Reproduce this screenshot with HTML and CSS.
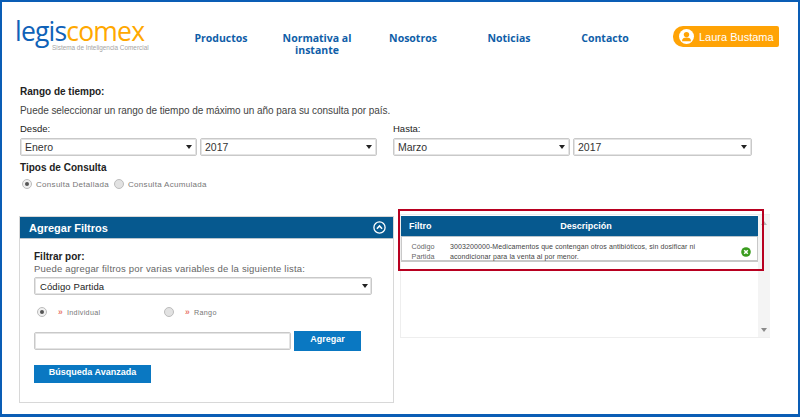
FILE: index.html
```html
<!DOCTYPE html>
<html lang="es">
<head>
<meta charset="utf-8">
<title>Legiscomex</title>
<link rel="stylesheet" href="styles.css">
</head>
<body>
<div class="frame">
  <header class="top">
    <div class="logo">
      <div class="logo-word"><span class="logo-a">legis</span><span class="logo-b">comex</span></div>
      <div class="logo-sub">Sistema de Inteligencia Comercial</div>
    </div>
    <nav class="nav">
      <a class="nav-item">Productos</a>
      <a class="nav-item">Normativa al instante</a>
      <a class="nav-item">Nosotros</a>
      <a class="nav-item">Noticias</a>
      <a class="nav-item">Contacto</a>
    </nav>
    <div class="user">
      <svg class="user-icon" width="15" height="15" viewBox="0 0 15 15"><circle cx="7.5" cy="7.5" r="7.5" fill="#fff"/><circle cx="7.5" cy="5.6" r="2.7" fill="#ffa305"/><path d="M3 12.2c0-2.6 1.8-3.7 4.5-3.7s4.500 1.100 4.500 3.700z" fill="#ffa305"/></svg>
      <span>Laura Bustama</span>
    </div>
  </header>

  <section class="range">
    <h2 class="label-strong">Rango de tiempo:</h2>
    <p class="hint">Puede seleccionar un rango de tiempo de máximo un año para su consulta por país.</p>
    <div class="dates">
      <div class="date-col date-from">
        <div class="label">Desde:</div>
        <div class="select-pair">
          <div class="select sel-w1"><span>Enero</span><i class="arrow"></i></div>
          <div class="select sel-w1"><span>2017</span><i class="arrow"></i></div>
        </div>
      </div>
      <div class="date-col">
        <div class="label">Hasta:</div>
        <div class="select-pair">
          <div class="select sel-w1"><span>Marzo</span><i class="arrow"></i></div>
          <div class="select sel-w2"><span>2017</span><i class="arrow"></i></div>
        </div>
      </div>
    </div>
    <h2 class="label-strong types">Tipos de Consulta</h2>
    <div class="types-row">
      <i class="radio on"></i><span class="type-text">Consulta Detallada</span>
      <i class="radio"></i><span class="type-text">Consulta Acumulada</span>
    </div>
  </section>

  <section class="panels">
    <div class="panel">
      <div class="panel-head">
        <span>Agregar Filtros</span>
        <svg width="13" height="13" viewBox="0 0 13 13"><circle cx="6.500" cy="6.500" r="5.600" fill="none" stroke="#fff" stroke-width="1.300"/><path d="M3.900 7.700 6.500 5l2.600 2.700" fill="none" stroke="#fff" stroke-width="1.600"/></svg>
      </div>
      <div class="panel-body">
        <div class="filter-title">Filtrar por:</div>
        <div class="filter-hint">Puede agregar filtros por varias variables de la siguiente lista:</div>
        <div class="select select-wide"><span>Código Partida</span><i class="arrow"></i></div>
        <div class="modes">
          <div class="mode mode-a"><i class="radio on"></i><b class="chev">»</b><span>Individual</span></div>
          <div class="mode"><i class="radio"></i><b class="chev">»</b><span>Rango</span></div>
        </div>
        <div class="add-row">
          <div class="text-input"></div>
          <button class="btn btn-add">Agregar</button>
        </div>
        <button class="btn btn-search">Búsqueda Avanzada</button>
      </div>
    </div>

    <div class="results">
      <div class="results-inner">
        <div class="table-head"><span class="col-a">Filtro</span><span class="col-b">Descripción</span></div>
        <div class="table-row">
          <span class="cell-a">Código Partida</span>
          <span class="cell-b">3003200000-Medicamentos que contengan otros antibióticos, sin dosificar ni acondicionar para la venta al por menor.</span>
          <svg class="remove" width="10" height="10" viewBox="0 0 10 10"><circle cx="5" cy="5" r="4.800" fill="#3a9c1e"/><path d="M3.200 3.200l3.600 3.600M6.800 3.200 3.200 6.800" stroke="#fff" stroke-width="1.500"/></svg>
        </div>
      </div>
      <div class="scrollbar"><svg width="6" height="4" viewBox="0 0 6 4"><path d="M3 0l3 4H0z" fill="#b5b5b5"/></svg><svg width="6" height="4" viewBox="0 0 6 4"><path d="M0 0h6L3 4z" fill="#8a8a8a"/></svg></div>
      <div class="highlight"></div>
    </div>
  </section>
</div>
</body>
</html>
```

FILE: styles.css
```css
* { box-sizing: border-box; }
html, body { margin: 0; padding: 0; }
body { width: 800px; height: 417px; overflow: hidden; background: #fff; font-family: "Liberation Sans", Arial, sans-serif; color: #222; }
.frame { width: 800px; height: 417px; border: solid #0a5db5; border-width: 2px 2px 3px 2px; padding: 0 0 0 18px; }

.top { display: flex; height: 76px; align-items: flex-start; }
.logo { width: 153px; margin-left: -5px; padding-top: 14px; color: #999; }
.logo-word { font-family: "Open Sans", sans-serif; font-size: 26.500px; line-height: 30px; letter-spacing: -0.8px; font-weight: 400; white-space: nowrap; }
.logo-a { color: #0e62b8; }
.logo-b { color: #ffa800; }
.logo-sub { font-size: 6.400px; line-height: 8px; margin-top: -2px; padding-left: 37px; color: #a5a5a5; white-space: nowrap; }
.nav { display: flex; width: 481px; margin-left: 5px; padding-top: 30px; }
.nav-item { width: 96px; text-align: center; padding: 0 8px; font-family: "Open Sans", sans-serif; font-weight: 700; font-size: 10.500px; line-height: 12px; color: #0f5ea8; }
.user { display: flex; align-items: center; gap: 5px; width: 106px; height: 21px; margin-top: 24px; margin-left: 19px; padding-left: 6px; border-radius: 10px 2px 2px 10px; background: #ffa305; color: #fff; font-size: 11px; white-space: nowrap; }
.user-icon { flex: none; }

.range { display: block; }
h2.label-strong { margin: 0; font-size: 10px; line-height: 13px; font-weight: 700; color: #222; padding-top: 7px; }
.hint { margin: 6px 0 0; font-size: 10px; line-height: 14px; color: #444; letter-spacing: -0.050px; }
.dates { display: flex; margin-top: 5px; }
.date-from { width: 373px; }
.label { font-size: 9.500px; line-height: 12px; color: #222; margin-bottom: 3px; }
.select-pair { display: flex; gap: 3px; }
.select { display: flex; justify-content: space-between; align-items: center; height: 18px; padding: 0 4px 0 4px; border: 1px solid #c9c9c9; border-radius: 2px; font-size: 10.500px; color: #333; background: #fff; box-shadow: inset 0 0 0 1px #e4e4e4; }
.sel-w1 { width: 177px; }
.sel-w2 { width: 179px; }
.arrow { width: 0; height: 0; border: 3px solid transparent; border-top: 4px solid #222; border-bottom: 0; }
h2.types { padding-top: 5px; }
.types-row { display: flex; align-items: center; height: 12px; margin-top: 4px; padding-left: 2px; }
.radio { flex: none; position: relative; display: block; width: 10px; height: 10px; border-radius: 50%; border: 1px solid #bcbcbc; background: #e2e2e2; }
.radio.on { background: #f0f0f0; }
.radio.on::after { content: ""; position: absolute; left: 2px; top: 2px; width: 4px; height: 4px; border-radius: 50%; background: #555; }
.type-text { font-size: 8px; letter-spacing: 0.300px; color: #777; margin: 0 5px 0 4px; }

.panels { display: flex; margin-top: 26px; }
.panel { width: 375px; height: 187px; margin-left: -1px; border: 1px solid #d8d8d8; }
.panel-head { display: flex; justify-content: space-between; align-items: center; height: 22px; padding: 0 7px 0 9px; background: #06598f; border-bottom: 1px solid #b8c4cc; color: #fff; font-size: 11px; font-weight: 700; }
.panel-body { padding: 12px 0 0 14px; }
.filter-title { font-size: 10px; line-height: 12px; font-weight: 700; color: #222; }
.filter-hint { font-size: 9.500px; line-height: 13px; margin-top: -1px; color: #666; letter-spacing: 0.180px; }
.select-wide { width: 338px; height: 18px; margin-top: 2px; padding: 0 3px 0 5px; font-size: 9.500px; letter-spacing: 0.100px; color: #222; }
.modes { display: flex; align-items: center; margin-top: 11px; padding-left: 3px; height: 12px; }
.mode { display: flex; align-items: center; font-size: 7.200px; letter-spacing: 0.300px; color: #777; }
.mode-a { width: 127px; }
.chev { width: 9px; margin-left: 11px; color: #e9786c; font-size: 8.500px; font-weight: 700; }
.add-row { display: flex; gap: 3px; margin-top: 13px; align-items: flex-start; height: 20px; }
.text-input { width: 257px; height: 18px; margin-top: 1px; border: 1px solid #c9c9c9; border-radius: 2px; box-shadow: inset 0 0 0 1px #e4e4e4; }
.btn { display: block; border: 0; margin: 0; background: #0a78c2; color: #fff; font-family: "Liberation Sans", Arial, sans-serif; font-size: 9px; font-weight: 700; padding: 0; text-align: center; }
.btn-add { width: 67px; height: 20px; padding-bottom: 5px; }
.btn-search { width: 117px; height: 18px; margin-top: 14px; padding-bottom: 5px; }

.results { position: relative; display: flex; width: 370px; height: 124px; margin-left: 6px; margin-top: -2px; border: solid #eee; border-width: 1px 0 1px 1px; }
.results-inner { width: 357px; padding-top: 1px; }
.table-head { display: flex; align-items: center; height: 21px; background: #06598f; border-bottom: 1px solid #b8c4cc; color: #fff; font-size: 9px; font-weight: 700; }
.col-a { width: 67px; padding-left: 8px; }
.col-b { width: 236px; text-align: center; }
.table-row { display: flex; align-items: flex-start; height: 25px; padding-top: 5px; border: 1px solid #c8c8c8; border-top: 0; border-bottom-width: 2px; }
.cell-a { width: 42px; flex: none; font-size: 7.200px; line-height: 10px; color: #666; text-align: center; }
.cell-b { width: 290px; flex: none; margin-left: 6px; padding-right: 40px; font-size: 7px; line-height: 10px; color: #444; letter-spacing: 0.100px; }
.remove { margin-left: 1px; margin-top: 5px; }
.scrollbar { display: flex; flex-direction: column; justify-content: space-between; align-items: center; width: 12px; padding: 6px 0 5px; background: #f4f4f4; }
.highlight { position: absolute; left: -3px; top: -6px; width: 366px; height: 62px; border: 2.500px solid #b80020; pointer-events: none; }
```
